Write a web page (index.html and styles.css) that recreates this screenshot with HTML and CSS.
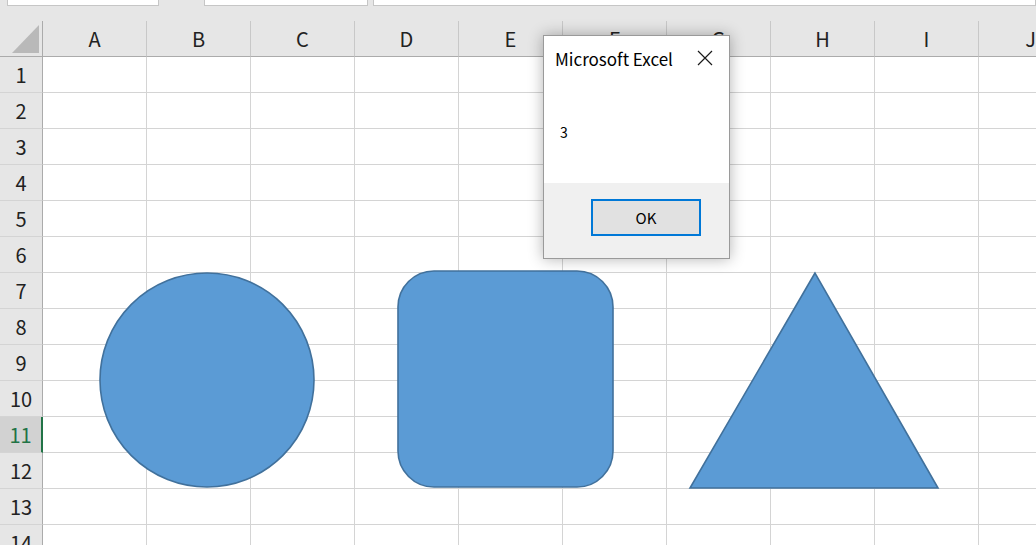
FILE: index.html
```html
<!DOCTYPE html>
<html lang="ja">
<head>
    <meta charset="UTF-8">
    <title>Microsoft Excel</title>
    <link rel="stylesheet" href="styles.css">
</head>
<body>
    <div class="topbar">
        <div class="box box-name"></div>
        <div class="box box-func"></div>
        <div class="box box-formula"></div>
    </div>

    <table class="sheet">
        <tr class="col-head">
            <th class="corner"><span class="select-all"></span></th>
            <th>A</th><th>B</th><th>C</th><th>D</th><th>E</th>
            <th>F</th><th>G</th><th>H</th><th>I</th><th>J</th>
        </tr>
        <tr><th>1</th><td></td><td></td><td></td><td></td><td></td><td></td><td></td><td></td><td></td><td></td></tr>
        <tr><th>2</th><td></td><td></td><td></td><td></td><td></td><td></td><td></td><td></td><td></td><td></td></tr>
        <tr><th>3</th><td></td><td></td><td></td><td></td><td></td><td></td><td></td><td></td><td></td><td></td></tr>
        <tr><th>4</th><td></td><td></td><td></td><td></td><td></td><td></td><td></td><td></td><td></td><td></td></tr>
        <tr><th>5</th><td></td><td></td><td></td><td></td><td></td><td></td><td></td><td></td><td></td><td></td></tr>
        <tr><th>6</th><td></td><td></td><td></td><td></td><td></td><td></td><td></td><td></td><td></td><td></td></tr>
        <tr><th>7</th><td></td><td></td><td></td><td></td><td></td><td></td><td></td><td></td><td></td><td></td></tr>
        <tr><th>8</th><td></td><td></td><td></td><td></td><td></td><td></td><td></td><td></td><td></td><td></td></tr>
        <tr><th>9</th><td></td><td></td><td></td><td></td><td></td><td></td><td></td><td></td><td></td><td></td></tr>
        <tr><th>10</th><td></td><td></td><td></td><td></td><td></td><td></td><td></td><td></td><td></td><td></td></tr>
        <tr class="active"><th>11</th><td></td><td></td><td></td><td></td><td></td><td></td><td></td><td></td><td></td><td></td></tr>
        <tr><th>12</th><td></td><td></td><td></td><td></td><td></td><td></td><td></td><td></td><td></td><td></td></tr>
        <tr><th>13</th><td></td><td></td><td></td><td></td><td></td><td></td><td></td><td></td><td></td><td></td></tr>
        <tr><th>14</th><td></td><td></td><td></td><td></td><td></td><td></td><td></td><td></td><td></td><td></td></tr>
    </table>

    <!-- 図形 -->
    <svg class="shapes" width="1036" height="545" viewBox="0 0 1036 545">
        <circle cx="207" cy="380" r="107" class="shape"/>
        <rect x="398" y="271" width="215" height="216" rx="36" ry="36" class="shape"/>
        <polygon points="815,273 690,488 938,488" class="shape"/>
    </svg>

    <div class="dialog">
        <div class="dialog-title">
            <span>Microsoft Excel</span>
            <svg class="close" width="16" height="16" viewBox="0 0 16 16">
                <path d="M1 1 L15 15 M15 1 L1 15" stroke="#1a1a1a" stroke-width="1.2" fill="none"/>
            </svg>
        </div>
        <div class="dialog-body">3</div>
        <div class="dialog-foot">
            <button class="btn-ok">OK</button>
        </div>
    </div>
</body>
</html>
```

FILE: styles.css
```css
html, body {
    margin: 0;
    padding: 0;
}
body {
    width: 1036px;
    height: 545px;
    overflow: hidden;
    position: relative;
    background: #fff;
    font-family: "Noto Sans CJK JP", "Noto Sans", sans-serif;
}
.topbar {
    height: 21px;
    background: #e6e6e6;
    display: flex;
    align-items: flex-start;
    padding-left: 7px;
    box-sizing: border-box;
}
.box {
    height: 6px;
    box-sizing: border-box;
    background: #fff;
    border: 1px solid #c6c6c6;
    border-top: none;
}
.box-name {
    width: 152px;
}
.box-func {
    width: 164px;
    margin-left: 45px;
}
.box-formula {
    flex: 1;
    margin-left: 5px;
}
.sheet {
    width: 1083px;
    border-collapse: separate;
    border-spacing: 0;
    table-layout: fixed;
}
.sheet th,
.sheet td {
    box-sizing: border-box;
    height: 36px;
    padding: 0;
}
.sheet td {
    width: 104px;
    border-right: 1px solid #d4d4d4;
    border-bottom: 1px solid #d4d4d4;
}
.sheet th {
    width: 104px;
    background: #e6e6e6;
    color: #222;
    font-weight: normal;
    font-size: 20px;
    line-height: 1;
    text-align: center;
    border-right: 1px solid #d4d4d4;
    border-bottom: 1px solid #d4d4d4;
}
.col-head th {
    border-right: 1px solid #c8c8c8;
    border-bottom: 1px solid #ababab;
}
.sheet tr > th:first-child {
    width: 43px;
    border-right: 1px solid #ababab;
}
.corner {
    position: relative;
}
.select-all {
    position: absolute;
    left: 12px;
    bottom: 3px;
    width: 0;
    height: 0;
    border-left: 27px solid transparent;
    border-bottom: 28px solid #b9b9b9;
}
.sheet .active th:first-child {
    background: #d2d2d2;
    color: #217346;
    border-right: 2px solid #217346;
}
.shapes {
    position: absolute;
    left: 0;
    top: 0;
}
.shape {
    fill: #5b9bd5;
    stroke: #41719c;
    stroke-width: 1.6;
}
.dialog {
    position: absolute;
    left: 543px;
    top: 35px;
    width: 187px;
    height: 224px;
    box-sizing: border-box;
    background: #fff;
    border: 1px solid #9a9a9a;
    box-shadow: 0 0 14px rgba(0,0,0,0.3);
    display: flex;
    flex-direction: column;
}
.dialog-title {
    height: 44px;
    display: flex;
    align-items: center;
    justify-content: space-between;
    padding: 0 16px 0 11px;
    font-size: 17px;
    color: #000;
}
.close {
    display: block;
}
.dialog-body {
    height: 103px;
    display: flex;
    align-items: center;
    padding-left: 16px;
    font-size: 14px;
    color: #000;
}
.dialog-foot {
    flex: 1;
    background: #f0f0f0;
    display: flex;
    justify-content: flex-end;
    align-items: flex-start;
    padding: 16px 28px 0 0;
}
.btn-ok {
    width: 110px;
    height: 37px;
    box-sizing: border-box;
    background: #e1e1e1;
    border: 2px solid #0078d7;
    font-family: "Noto Sans CJK JP", "Noto Sans", sans-serif;
    font-size: 15px;
    color: #000;
    padding: 0;
}
```
